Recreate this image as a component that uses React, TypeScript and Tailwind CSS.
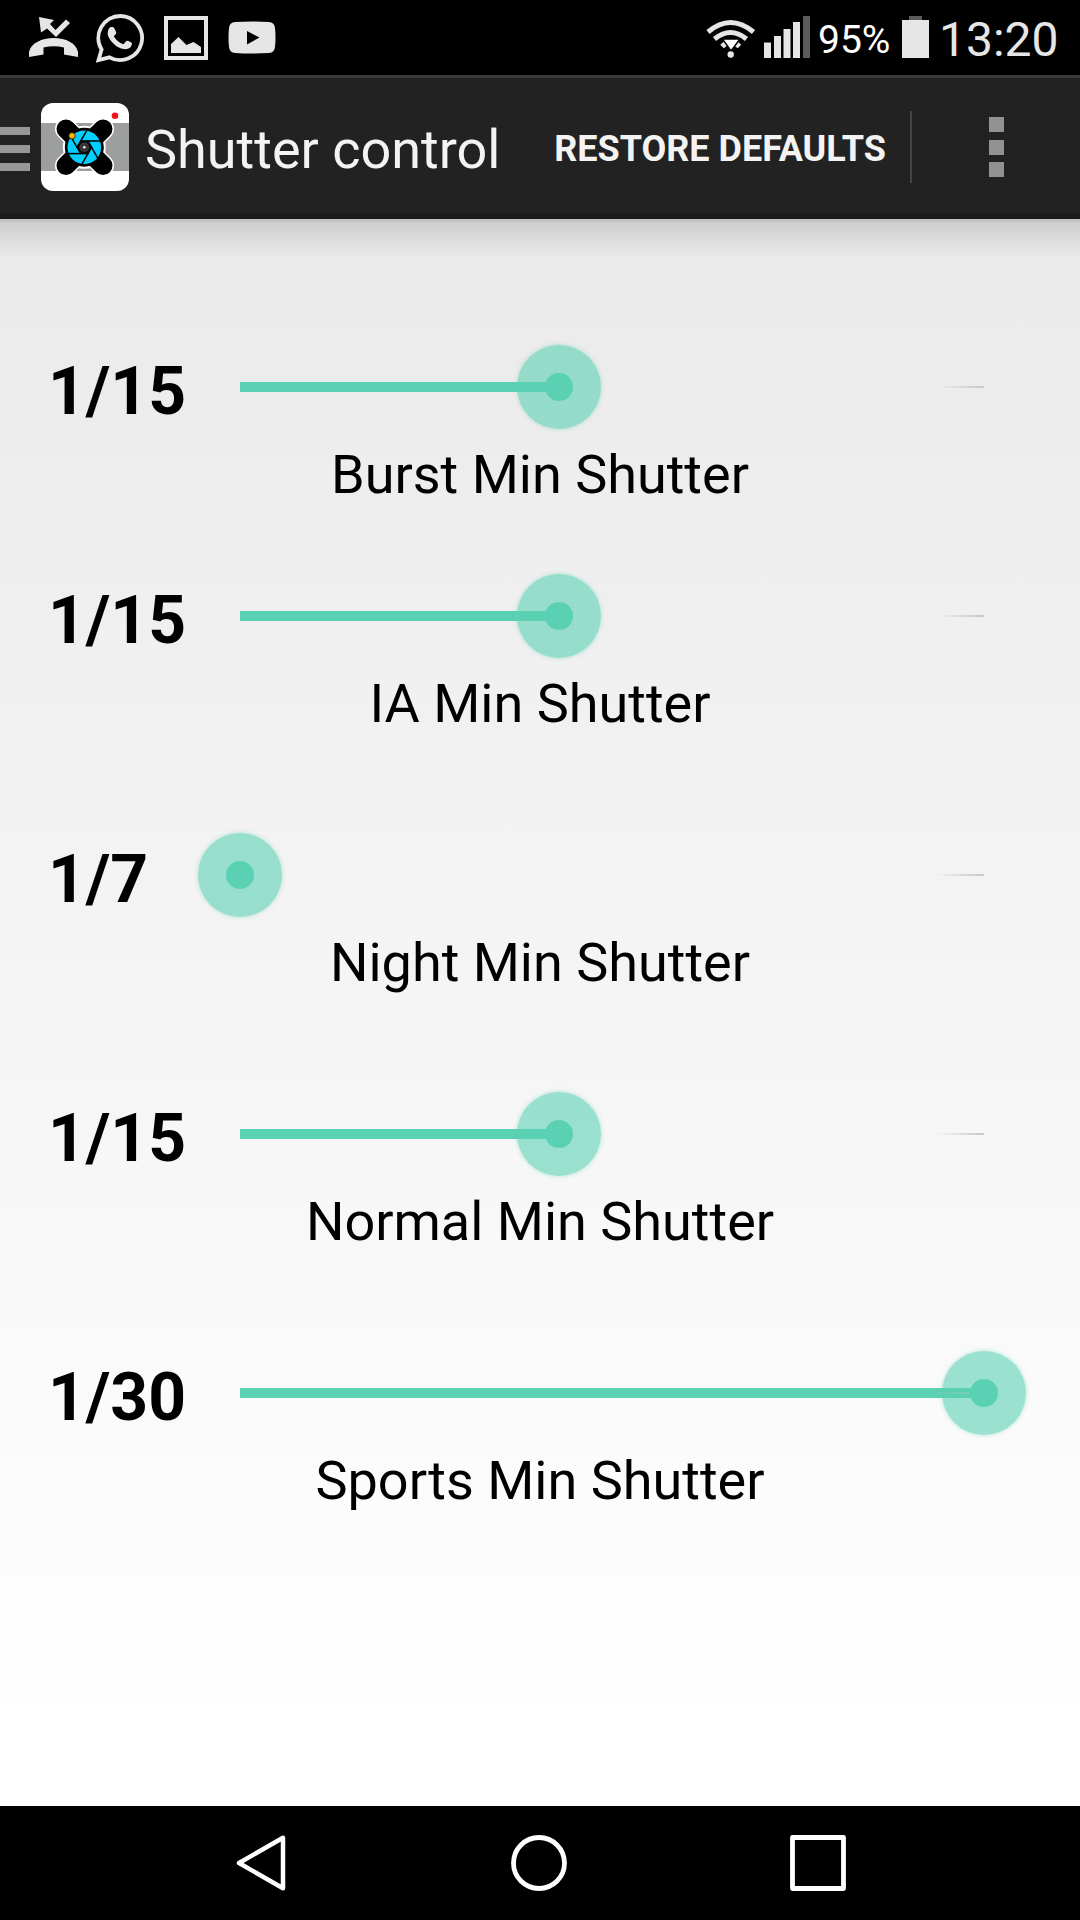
import React, { useState } from 'react';

const STOPS = ['1/7', '', '', '1/15', '', '', '', '1/30'];

const SETTINGS = [
  { label: 'Burst Min Shutter', value: 3, spacing: '' },
  { label: 'IA Min Shutter', value: 3, spacing: 'mt-[68px]' },
  { label: 'Night Min Shutter', value: 0, spacing: 'mt-[98px]' },
  { label: 'Normal Min Shutter', value: 3, spacing: 'mt-[98px]' },
  { label: 'Sports Min Shutter', value: 7, spacing: 'mt-[98px]' },
];

function StatusBar() {
  return (
    <div className="flex h-[75px] items-start bg-black text-[#e6e6e6]">
      <svg className="ml-[28px] mt-[14px] h-12 w-[52px]" viewBox="28 14 52 48" fill="currentColor">
        <path d="M29 57 V52 C31 43 42 38 53.500 38 C66 38 76 43 78 52 V57 L64 54.500 V47.500 Q54 45 43.500 47.500 V54.500 Z" />
        <path d="M39 17 L54 20 L50 24 L55.500 30 L66 19.500 L70 23 L56 37 L47 28.500 L41 32.500 Z" />
      </svg>
      <svg className="ml-[15px] mt-[13px] h-[50px] w-[50px]" viewBox="95 13 50 50" fill="currentColor">
        <path
          d="M120.500 16 A22 22 0 1 1 109.500 57.300 L98.500 60 L101.600 49.500 A22 22 0 0 1 120.500 16 Z"
          fill="none"
          stroke="currentColor"
          strokeWidth="3.800"
        />
        <path d="M110.500 27 H112.700 Q114 27 114.500 28.500 L116.300 32.500 Q116.300 34 113.800 36.300 Q117 42 123.500 44.300 L126.300 41 Q127 40.300 128.500 41 L132 43 Q132 48.500 126 49.200 C117 49.500 107.500 39 107.700 33 Q108 28.500 110.500 27 Z" />
      </svg>
      <svg className="ml-[19px] mt-[16px] h-11 w-11" viewBox="0 0 44 44">
        <rect x="2" y="2" width="40" height="40" fill="none" stroke="currentColor" strokeWidth="4" />
        <path d="M7 28 L14.500 21 L22.500 29 L29.500 26 L37 31 V37 H7 Z" fill="currentColor" />
      </svg>
      <svg className="ml-[20px] mt-[21px] h-[33px] w-12" viewBox="0 0 48 33">
        <path d="M7 1 Q24 0 41 1 Q46.500 1.500 47 7 Q48 16.500 47 26 Q46.500 31.500 41 32 Q24 33 7 32 Q1.500 31.500 1 26 Q0 16.500 1 7 Q1.500 1.500 7 1 Z" fill="currentColor" />
        <path d="M19 10 V23.500 L31.500 16.500 Z" fill="#000" />
      </svg>

      <svg className="ml-auto mt-[18px] h-[42px] w-[50px]" viewBox="706 18 50 42" fill="none" stroke="currentColor" strokeWidth="5">
        <path d="M708 32 Q730.500 13 753.500 32" />
        <path d="M714.500 39 Q730.500 26 746.500 39" />
        <path d="M722 46.500 Q730.500 38 739.500 46.500" />
        <path d="M722.500 39 H740 L731 51 Z" fill="#fff" stroke="#000" strokeWidth="1.500" />
        <circle cx="730.700" cy="54.500" r="3.200" fill="currentColor" stroke="none" />
      </svg>
      <svg className="ml-[8px] mt-[16px] h-[42px] w-[46px]" viewBox="0 0 46 42" fill="currentColor">
        <rect x="0" y="26.500" width="7" height="15.500" />
        <rect x="10" y="20" width="7" height="22" />
        <rect x="19.500" y="13" width="7" height="29" />
        <rect x="29" y="6" width="7" height="36" />
        <rect x="39" y="0" width="7" height="42" fill="#5b5b5b" />
      </svg>
      <span className="ml-[8px] mt-[18px] w-[72px] text-[39px] leading-[44px] text-white">95%</span>
      <svg className="ml-[12px] mt-[16px] h-[42px] w-[27px]" viewBox="0 0 27 42">
        <rect x="7" y="0" width="13" height="4" fill="#5b5b5b" />
        <rect x="0" y="4" width="27" height="38" fill="currentColor" />
      </svg>
      <span className="ml-[10px] mr-[20px] mt-[11px] w-[121px] text-[48px] leading-[57px]">13:20</span>
    </div>
  );
}

function AppIcon() {
  return (
    <svg className="ml-[11px] h-[88px] w-[88px]" viewBox="0 0 88 88">
      <rect width="88" height="88" rx="12" fill="#fff" />
      <rect y="20" width="88" height="48" fill="#9d9f9e" />
      <circle cx="74" cy="12.800" r="3.300" fill="#ed1620" />
      <g stroke="#fff" strokeWidth="22" strokeLinecap="round">
        <path d="M25 26 L62 62.500 M62 26 L25 62.500" />
      </g>
      <circle cx="43.300" cy="44.300" r="21.500" fill="#fff" />
      <g stroke="#000" strokeWidth="19" strokeLinecap="round">
        <path d="M25 26 L62 62.500 M62 26 L25 62.500" />
      </g>
      <circle cx="43.300" cy="44.300" r="19.500" fill="#000" />
      <circle cx="43.300" cy="44.300" r="16.800" fill="#00cfff" />
      <g transform="translate(43.300 44.300)">
        {[0, 60, 120, 180, 240, 300].map((angle) => (
          <path key={angle} d="M-4.300 -6.300 H16" stroke="#000" strokeWidth="1.500" transform={`rotate(${angle})`} />
        ))}
        <circle r="6.500" fill="#000" />
        <circle r="5" fill="#363636" />
        <circle r="1.200" fill="#fff" />
      </g>
      <circle cx="31" cy="32.800" r="3.200" fill="#ffb900" stroke="#000" strokeWidth="0.700" />
    </svg>
  );
}

function ActionBar() {
  return (
    <header className="flex h-36 items-center border-b-6 border-t-3 border-b-[#1b1b1b] border-t-[#3b3b3b] bg-[#222222] pt-[3px] text-[#f3f3f3]">
      <button className="mt-[4px] flex w-[30px] flex-col gap-[10px]" aria-label="Menu">
        <span className="h-2 bg-[#979797]" />
        <span className="h-2 bg-[#979797]" />
        <span className="h-2 bg-[#979797]" />
      </button>
      <AppIcon />
      <h1 className="ml-[16px] mt-[6px] whitespace-nowrap text-[54px] leading-[64px]">Shutter control</h1>
      <button className="ml-auto mt-[3px] whitespace-nowrap text-[36px] font-bold leading-[44px]">RESTORE DEFAULTS</button>
      <div className="ml-[24px] h-[72px] w-[2px] bg-[#444]" />
      <button className="ml-[77px] mr-[76px] flex w-[15px] flex-col gap-[7.500px]" aria-label="More options">
        <span className="h-[15px] bg-[#929292]" />
        <span className="h-[15px] bg-[#929292]" />
        <span className="h-[15px] bg-[#929292]" />
      </button>
    </header>
  );
}

interface ShutterSliderProps {
  label: string;
  value: number;
  onChange: (value: number) => void;
}

function ShutterSlider({ label, value, onChange }: ShutterSliderProps) {
  const percent = (value / 7) * 100;

  return (
    <div>
      <div className="flex h-[84px] items-center">
        <span className="w-[240px] pl-[48px] pt-[9px] text-[66px] font-bold leading-[76px]">{STOPS[value]}</span>
        <div className="relative flex h-[84px] w-[744px] items-center">
          <div className="absolute right-0 h-[2px] w-[47px] bg-linear-to-r from-transparent to-[#c6c6c6]" />
          <div className="h-[10px] bg-[#5bd1b3]" style={{ width: `${percent}%` }} />
          <div
            className="absolute flex h-[84px] w-[84px] -translate-x-1/2 items-center justify-center rounded-full bg-[#5bd1b3]/60 shadow-[0_0_4px_rgba(91,209,179,0.5)]"
            style={{ left: `${percent}%` }}
          >
            <div className="h-7 w-7 rounded-full bg-[#5bd1b3]" />
          </div>
          <input
            type="range"
            min={0}
            max={7}
            value={value}
            aria-label={label}
            onChange={(e) => onChange(Number(e.target.value))}
            className="absolute inset-0 h-full w-full opacity-0"
          />
        </div>
      </div>
      <p className="mt-[14px] text-center text-[54px] leading-[63px]">{label}</p>
    </div>
  );
}

function NavBar() {
  return (
    <nav className="flex h-[114px] items-start bg-black pt-[29px]">
      <svg className="ml-[236px] h-14 w-[50px]" viewBox="0 0 50 56" fill="none" stroke="#fff" strokeWidth="4.500" strokeLinejoin="round">
        <path d="M3 28 L47 2.800 V53.200 Z" />
      </svg>
      <svg className="ml-[225px] h-14 w-14" viewBox="0 0 56 56" fill="none" stroke="#fff" strokeWidth="4.800">
        <circle cx="28" cy="28" r="25.500" />
      </svg>
      <svg className="ml-[223px] h-14 w-14" viewBox="0 0 56 56" fill="none" stroke="#fff" strokeWidth="4.800" strokeLinejoin="round">
        <rect x="2.500" y="2.500" width="51" height="51" />
      </svg>
    </nav>
  );
}

function App() {
  const [values, setValues] = useState(SETTINGS.map((s) => s.value));

  const handleChange = (index: number, value: number) => {
    setValues(values.map((v, i) => (i === index ? value : v)));
  };

  return (
    <div className="flex h-[1920px] w-[1080px] flex-col overflow-hidden bg-black font-[Roboto,sans-serif]">
      <StatusBar />
      <ActionBar />
      <main className="flex-1 bg-linear-to-b from-[#eaeaea] to-white to-95% text-black">
        <div className="h-[3px] bg-[#c3c3c3]" />
        <div className="h-[36px] bg-linear-to-b from-black/12 to-transparent" />
        <div className="pt-[87px]">
          {SETTINGS.map((setting, i) => (
            <div key={setting.label} className={setting.spacing}>
              <ShutterSlider label={setting.label} value={values[i]} onChange={(v) => handleChange(i, v)} />
            </div>
          ))}
        </div>
      </main>
      <NavBar />
    </div>
  );
}

export default App;
